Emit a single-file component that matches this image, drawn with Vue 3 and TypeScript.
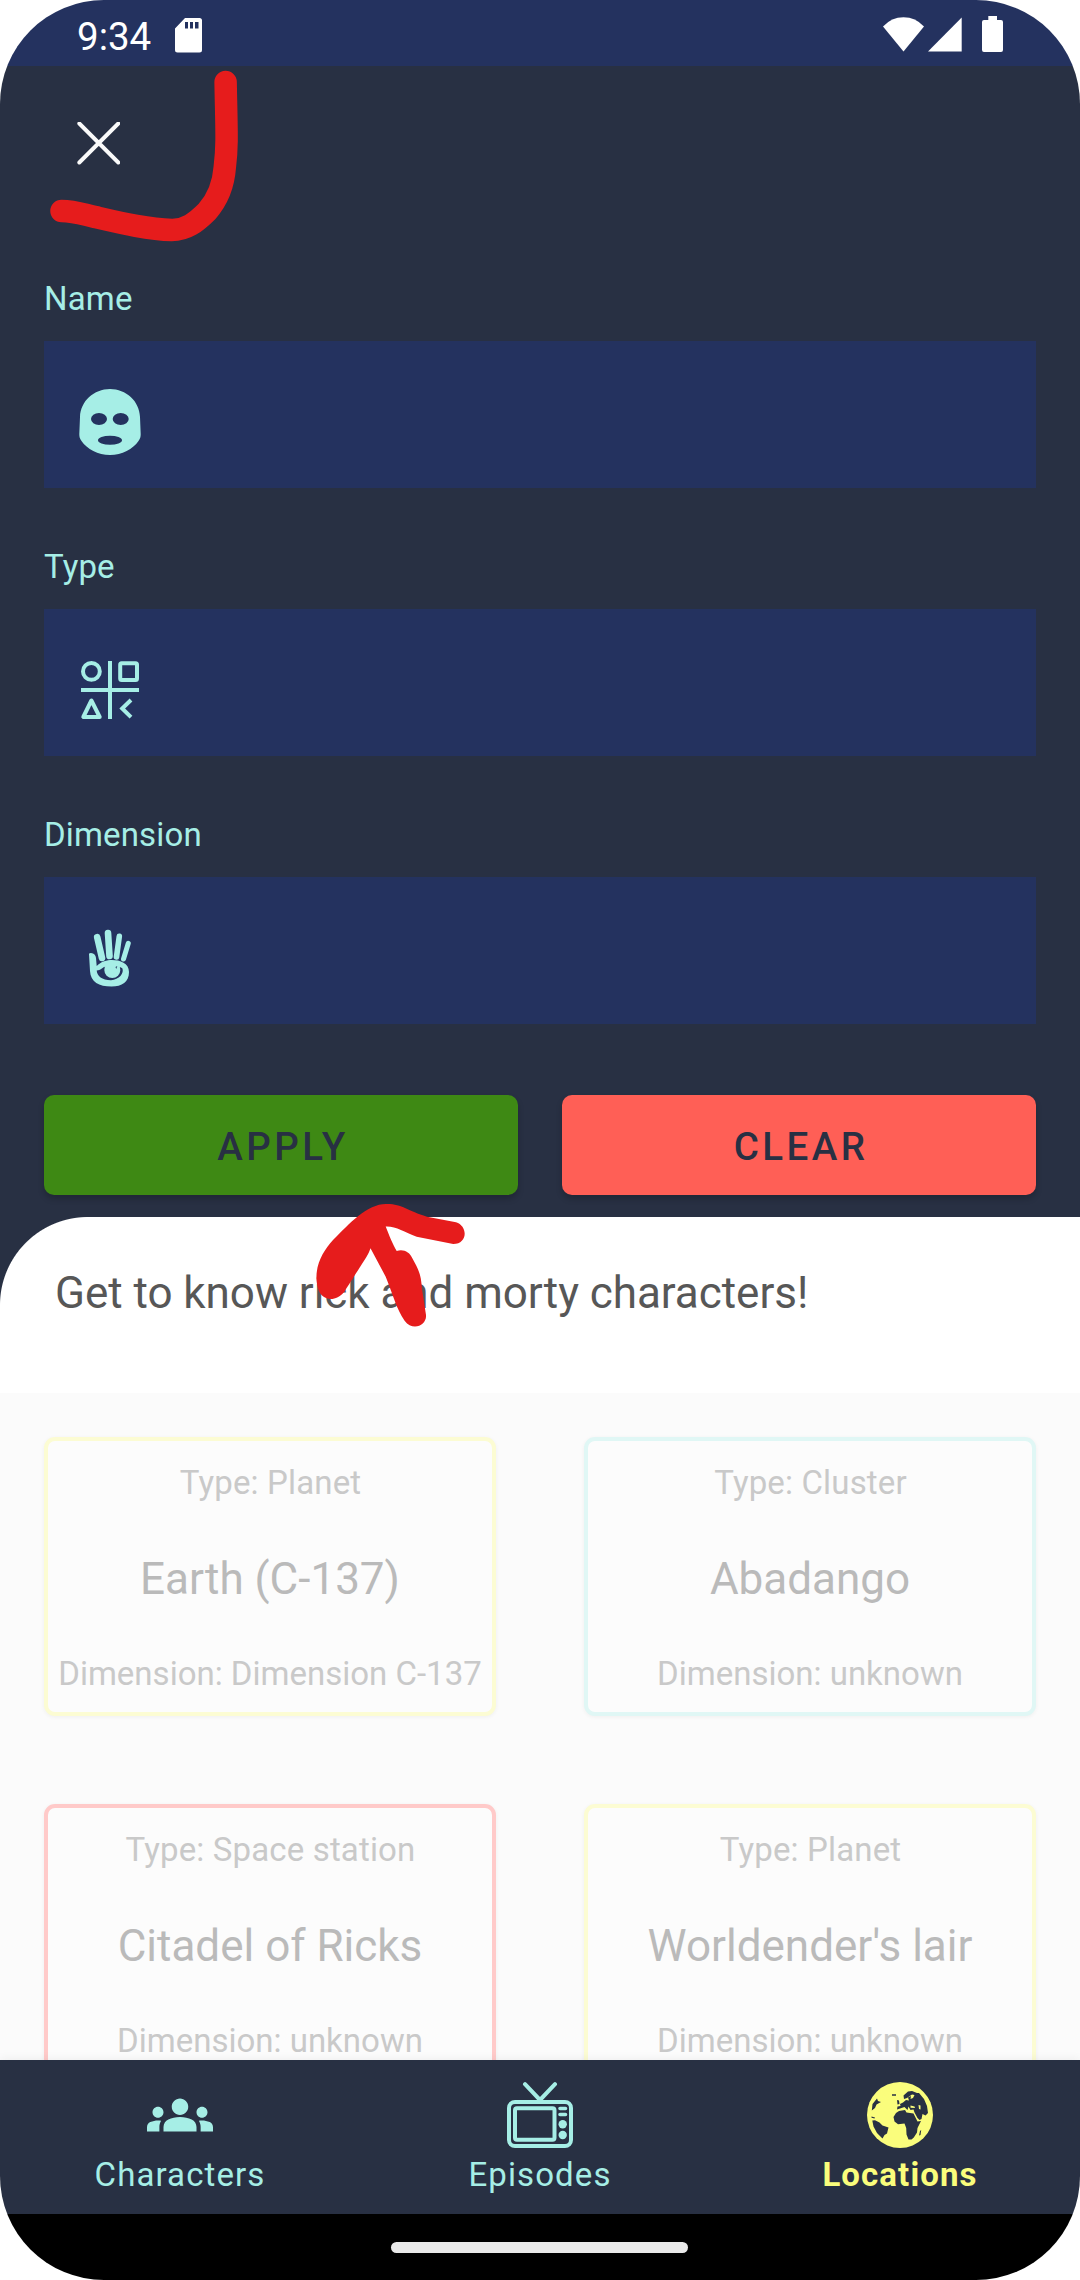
<script setup lang="ts">
interface Field {
  label: string
  icon: 'face' | 'shapes' | 'hand'
}

interface Place {
  type: string
  name: string
  dimension: string
  tone: 'yellow' | 'mint' | 'red'
}

interface Tab {
  label: string
  icon: 'groups' | 'tv' | 'globe'
  active: boolean
}

const fields: Field[] = [
  { label: 'Name', icon: 'face' },
  { label: 'Type', icon: 'shapes' },
  { label: 'Dimension', icon: 'hand' },
]

const places: Place[] = [
  { type: 'Planet', name: 'Earth (C-137)', dimension: 'Dimension C-137', tone: 'yellow' },
  { type: 'Cluster', name: 'Abadango', dimension: 'unknown', tone: 'mint' },
  { type: 'Space station', name: 'Citadel of Ricks', dimension: 'unknown', tone: 'red' },
  { type: 'Planet', name: "Worldender's lair", dimension: 'unknown', tone: 'yellow' },
]

const tabs: Tab[] = [
  { label: 'Characters', icon: 'groups', active: false },
  { label: 'Episodes', icon: 'tv', active: false },
  { label: 'Locations', icon: 'globe', active: true },
]
</script>

<template>
  <div class="screen">
    <header class="status">
      <span class="clock">9:34</span>
      <svg class="sd" width="27" height="35" viewBox="0 0 27 35">
        <path fill="#fff" fill-rule="evenodd" d="M10 0H24.500Q27 0 27 2.500V32Q27 34.500 24.500 34.500H2.500Q0 34.500 0 32V10.500ZM10 4V10.500H13V4ZM15 4V10.500H18V4ZM20 4V10.500H23.500V4Z" />
      </svg>
      <svg class="signals" width="121" height="37" viewBox="0 0 121 37">
        <g fill="#fff">
          <path d="M0 10.500Q8.500 1.300 20.500 1.300T41 10.500L20.500 35.500Z" />
          <path d="M45 35.500L78.700 1.500V35.500Z" />
          <path d="M105.300 0H114V4H118Q120 4 120 6V34Q120 36 118 36H101Q99 36 99 34V6Q99 4 101 4H105.300Z" />
        </g>
      </svg>
    </header>

    <section class="filters">
      <svg class="close" width="43" height="43" viewBox="0 0 43 43">
        <path d="M2.300 1.500L41.300 40.500M41.300 1.500L2.300 40.500" stroke="#fafafa" stroke-width="3.900" stroke-linecap="round" />
      </svg>

      <div v-for="field in fields" :key="field.label" class="field">
        <label>{{ field.label }}</label>
        <div class="input">
          <svg v-if="field.icon === 'face'" width="66" height="66" viewBox="0 0 66 66">
            <path fill="#a6eee6" fill-rule="evenodd" d="M33 0C49 0 62.500 12 63 28L63.700 45C63.700 48 63.200 49.500 61.500 52C56 60 45 66 33 66S10 60 4.500 52C2.800 49.500 2.300 48 2.300 45L3 28C3.500 12 17 0 33 0ZM22 24A8 6 0 1 0 22 36A8 6 0 1 0 22 24ZM43.700 24A8 6 0 1 0 43.700 36A8 6 0 1 0 43.700 24ZM33 46.800A12 4.500 0 1 0 33 55.800A12 4.500 0 1 0 33 46.800Z" />
          </svg>
          <svg v-else-if="field.icon === 'shapes'" width="66" height="66" viewBox="0 0 66 66">
            <g fill="none" stroke="#a6eee6" stroke-width="4">
              <circle cx="14.400" cy="14.400" r="8.400" />
              <rect x="43.200" y="6.200" width="16.800" height="16.800" rx="1.500" />
              <path d="M33 4V62M4 33H62" />
              <path d="M14.400 43.500L6.300 60H22.700Z" stroke-linejoin="round" />
              <path d="M54 43L45.200 51.500L54 60.200" />
            </g>
          </svg>
          <svg v-else width="66" height="66" viewBox="0 0 66 66">
            <g fill="none" stroke="#a6eee6" stroke-linecap="round">
              <path d="M20.200 12.200L25 33" stroke-width="6.600" />
              <path d="M31 8L32.500 31" stroke-width="6.600" />
              <path d="M42.300 11.300L39.500 32" stroke-width="5.600" />
              <path d="M51.300 18.300L46.500 34" stroke-width="5" />
            </g>
            <path fill="#a6eee6" d="M12 29Q12 28 14 28Q18.500 28.500 19 33L19.700 41C24 36.500 30 35 35 35C43 35 52 38 52 47C52 57 45 61.500 34.500 61.500C22 61.500 13.500 57 13 46Z" />
            <path fill="#24325f" d="M19.700 45.500Q22.500 45.500 27 42C33 41 42 41 45.300 43.300C47.500 48 42 55 34 55.200C25 55.200 20 51 19.700 45.500Z" />
            <circle cx="35.300" cy="45" r="8" fill="#a6eee6" />
            <path fill="#24325f" d="M38.500 42L40.300 41L39.200 44Z" />
          </svg>
        </div>
      </div>

      <div class="actions">
        <button class="apply">APPLY</button>
        <button class="clear">CLEAR</button>
      </div>
    </section>

    <section class="heading">
      <h1>Get to know rick and morty characters!</h1>
    </section>

    <main class="list">
      <article v-for="place in places" :key="place.name" class="card" :class="place.tone">
        <p class="meta kind">Type: {{ place.type }}</p>
        <h2>{{ place.name }}</h2>
        <p class="meta">Dimension: {{ place.dimension }}</p>
      </article>
    </main>

    <nav class="tabs">
      <div v-for="tab in tabs" :key="tab.label" class="tab" :class="{ active: tab.active }">
        <svg v-if="tab.icon === 'groups'" width="66" height="66" viewBox="0 0 24 24">
          <path fill="currentColor" d="M12 12.750c1.630 0 3.070.390 4.240.900 1.080.480 1.760 1.560 1.760 2.730V18H6v-1.610c0-1.180.680-2.260 1.760-2.730 1.170-.520 2.610-.910 4.240-.910zM4 13c1.100 0 2-.900 2-2s-.900-2-2-2-2 .900-2 2 .900 2 2 2zm1.130 1.100c-.370-.060-.740-.100-1.130-.100-.990 0-1.930.210-2.780.580C.480 14.900 0 15.620 0 16.430V18h4.500v-1.610c0-.830.230-1.610.630-2.290zM20 13c1.100 0 2-.900 2-2s-.900-2-2-2-2 .900-2 2 .900 2 2 2zm4 3.430c0-.810-.480-1.530-1.220-1.850-.850-.370-1.790-.580-2.780-.580-.390 0-.760.040-1.130.100.400.680.630 1.460.630 2.290V18H24v-1.570zM12 6c1.660 0 3 1.340 3 3s-1.340 3-3 3-3-1.340-3-3 1.340-3 3-3z" />
        </svg>
        <svg v-else-if="tab.icon === 'tv'" width="66" height="66" viewBox="0 0 66 66">
          <g fill="none" stroke="currentColor" stroke-width="4" stroke-linecap="round">
            <path d="M18 2.200L33 18L48 2.200" />
            <rect x="2" y="20" width="62" height="44" rx="6" />
            <rect x="8" y="26.300" width="39.500" height="31.500" rx="2" />
            <path d="M53 26.500H58.500M53 32.500H58.500" stroke-width="3.600" />
          </g>
          <circle cx="55.700" cy="42.300" r="4.200" fill="currentColor" />
          <circle cx="55.700" cy="53" r="4.200" fill="currentColor" />
        </svg>
        <svg v-else width="66" height="66" viewBox="0 0 66 66">
          <circle cx="33" cy="33" r="33" fill="currentColor" />
          <g fill="#283043">
            <path d="M32 29L38 28L39.500 30.500L43 31L46.500 31.500L49.500 37.500L50.500 39.500L54 39L50.500 46L50 50.500L46.800 55.500L44.500 57.500L41.500 57.500L39.500 52.500L39.200 46L37.500 41.500L31 42.300L27.500 39.500L26.500 35L29 31Z" />
            <path d="M5.300 38.500L8 38.200L12.500 40.500L15.500 43.500L21.500 45.500L20 51.500L17.500 53L15.500 56.500L10 51L6.500 44.500Z" />
            <path d="M4.800 28.500L5.500 22L10 16.500L11 19L14 20L9.500 22.500L8 26Z" />
            <path d="M4.500 34.500L8 35.500L7.500 36.500L4.500 35.700Z" />
            <path d="M30 27.500L30.500 24.500L33.500 24L33 22L36 20.500L39 18L42 18.500L41 15.500L44 14L43.500 17L46 16L47.500 13L45 12.500L40 16L37 17L36.500 13.500L41 9.500L45 9L50 11L52 11L57 17L60 24L61 31L58.500 33.500L55.500 32L54.500 37L52.500 38L50.500 36L47.500 30.500L46.500 27.500L43.500 28L41.500 24.500L40.500 28L37.500 25L33 26.500Z" />
            <path d="M25 12.200H29V13.800H25ZM30 18L32 18.500L32.500 22L30.500 22.500ZM53 49L54.200 48L53.500 53L52 53.500Z" />
          </g>
          <path d="M43.500 23.500L47.500 24.500L48 26L43.500 25.800ZM51.500 23L53.500 23.500V27.500L52 27Z" fill="currentColor" />
        </svg>
        <span>{{ tab.label }}</span>
      </div>
    </nav>

    <footer class="gesture"><i></i></footer>

    <svg class="marks" width="1080" height="2280" viewBox="0 0 1080 2280">
      <path d="M61.500 211C74 211 82 214 95 217C121 223 148 229.500 172 230C186 230 196 222.500 207 211.500C218 199 223.500 185 224.800 167C227.600 145 226.500 130 225.600 82" fill="none" stroke="#e61c1c" stroke-width="22.500" stroke-linecap="round" />
      <path fill="#e61c1c" d="M387.400 1204C402 1204 408 1211 427 1216.700L456 1222.300C468 1226 468 1244 453.200 1244L416.700 1236.700C404 1232 396 1226 385.700 1226.500C389 1235 393 1245 396.700 1251C403 1248.500 410 1252 412.200 1258C420 1272 421 1276 422 1289L426 1315C427 1325 413 1332 404.600 1320.700C396 1308 394 1297 385.700 1276.700L370.500 1248.300C368 1256 363 1262 344.400 1291.700C335 1303 322 1300 318.500 1290C312 1270 322 1252 333 1240C350 1223 368 1203 387.400 1204Z" />
    </svg>
  </div>
</template>

<style>
body {
  margin: 0;
  background: #fff;
}
</style>

<style scoped>
.screen {
  position: relative;
  width: 1080px;
  height: 2280px;
  display: flex;
  flex-direction: column;
  overflow: hidden;
  border-radius: 104px;
  background: #fbfbfb;
  font-family: Roboto, "Noto Sans", sans-serif;
}

.screen svg {
  display: block;
  flex: none;
}

.status {
  flex: none;
  height: 66px;
  box-sizing: border-box;
  padding: 0 76px 0 77px;
  display: flex;
  align-items: flex-start;
  background: #24325f;
  color: #fff;
}

.clock {
  width: 98px;
  font-size: 38.5px;
  line-height: 46px;
  padding-top: 14px;
}

.sd {
  margin-top: 18px;
}

.signals {
  margin-top: 16px;
  margin-left: auto;
}

.filters {
  flex: none;
  height: 1151px;
  box-sizing: border-box;
  padding: 56px 44px 0;
  background: #283043;
}

.close {
  margin: 0 0 114px 33px;
}

.field {
  height: 268px;
}

.field label {
  display: block;
  color: #a6eee6;
  font-size: 33px;
  line-height: 39px;
  letter-spacing: 0.15px;
}

.input {
  box-sizing: border-box;
  height: 147px;
  margin-top: 23px;
  padding: 48px 33px 0;
  background: #24325f;
}

.actions {
  display: flex;
  gap: 44px;
  margin-top: 12px;
}

.actions button {
  flex: 1;
  height: 100px;
  padding: 2px 0 0 4px;
  border: 0;
  border-radius: 10px;
  color: #283043;
  font-family: inherit;
  font-size: 38.5px;
  font-weight: 500;
  letter-spacing: 3.44px;
  box-shadow: 0 4px 6px rgba(0, 0, 0, 0.2);
}

.actions .apply {
  background: #3e8914;
}

.actions .clear {
  background: #ff5f56;
}

.heading {
  flex: none;
  height: 176px;
  box-sizing: border-box;
  padding: 50px 55px 0;
  background: radial-gradient(circle at 88px 88px, #fff 87.5px, #283043 88.5px) 0 0 / 88px 88px no-repeat, #fff;
}

h1 {
  margin: 0;
  color: #575757;
  font-size: 44px;
  font-weight: 400;
  line-height: 52px;
  letter-spacing: -0.04px;
}

.list {
  flex: none;
  height: 667px;
  box-sizing: border-box;
  padding: 44px 44px 0;
  display: grid;
  grid-template-columns: 452px 452px;
  grid-auto-rows: 279px;
  gap: 88px;
  overflow: hidden;
  background: #fbfbfb;
}

.card {
  box-sizing: border-box;
  padding-top: 22px;
  border: 4px solid;
  border-radius: 11px;
  background: #fcfcfc;
  box-shadow: 0 1px 4px rgba(0, 0, 0, 0.05);
  text-align: center;
  white-space: nowrap;
}

.yellow {
  border-color: #fcfcd3;
}

.mint {
  border-color: #e0f7f5;
}

.red {
  border-color: #ffcac9;
}

.meta {
  margin: 0;
  color: #c9c9c9;
  font-size: 33px;
  line-height: 39px;
}

.kind {
  padding-left: 1px;
  letter-spacing: 0.15px;
}

h2 {
  margin: 51px 0 49px;
  color: #bababa;
  font-size: 44px;
  font-weight: 400;
  line-height: 52px;
}

.tabs {
  position: relative;
  flex: none;
  height: 154px;
  display: flex;
  background: #283043;
  box-shadow: 0 0 10px rgba(0, 0, 0, 0.07);
}

.tab {
  flex: 1;
  display: flex;
  flex-direction: column;
  align-items: center;
  padding-top: 22px;
  color: #a6eee6;
}

.tab span {
  margin-top: 7px;
  font-size: 33px;
  line-height: 39px;
  letter-spacing: 1.1px;
}

.tab.active {
  color: #fafd7c;
  font-weight: 700;
}

.gesture {
  position: relative;
  flex: none;
  height: 66px;
  box-sizing: border-box;
  padding-right: 1px;
  display: flex;
  align-items: center;
  justify-content: center;
  background: #000;
}

.gesture i {
  width: 297px;
  height: 11px;
  border-radius: 6px;
  background: #eaeaea;
}

.marks {
  position: absolute;
  left: 0;
  top: 0;
  pointer-events: none;
}
</style>
